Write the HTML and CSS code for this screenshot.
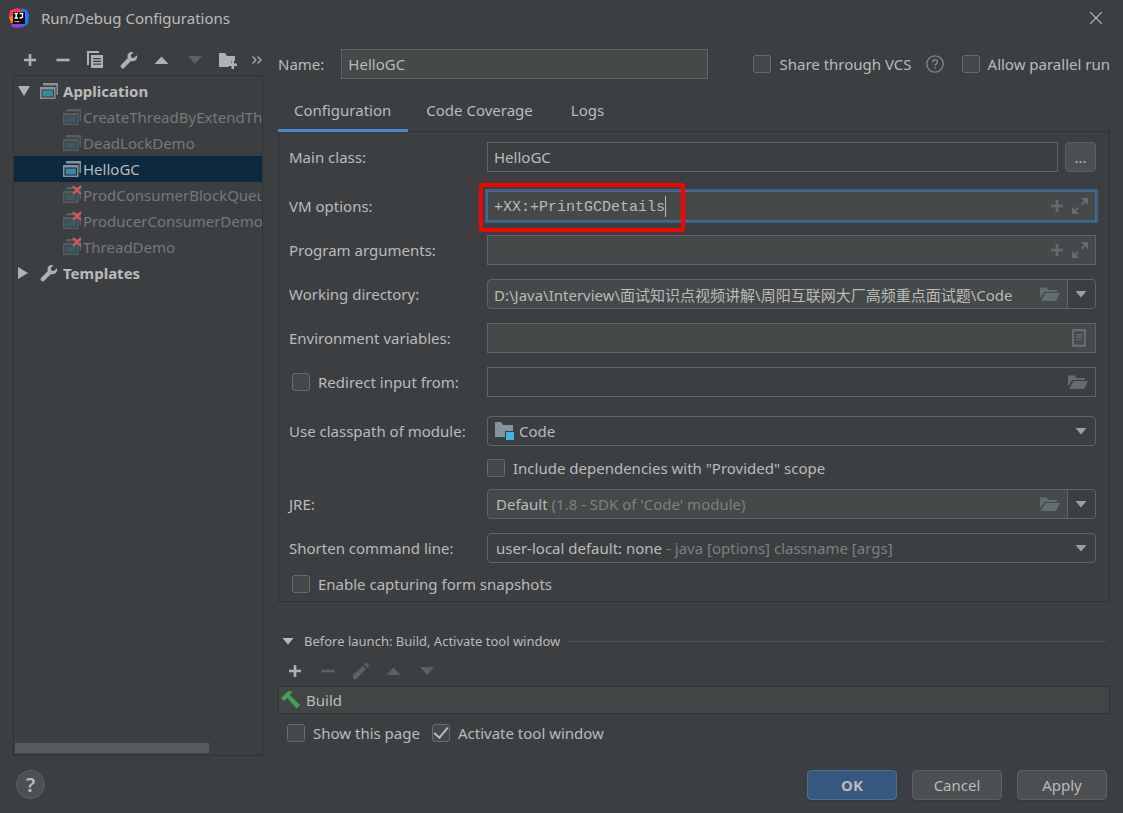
FILE: index.html
```html
<!DOCTYPE html>
<html lang="en">
<head>
<meta charset="utf-8">
<title>Run/Debug Configurations</title>
<link rel="stylesheet" href="styles.css">
</head>
<body>
<svg class="defs" aria-hidden="true">
  <symbol id="plus" viewBox="0 0 18 18"><path d="M7.700 3h2.600v4.700H15v2.600h-4.700V15H7.700v-4.700H3V7.700h4.700z"/></symbol>
  <symbol id="minus" viewBox="0 0 18 18"><path d="M2.500 7.700h13v2.600h-13z"/></symbol>
  <symbol id="copy" viewBox="0 0 18 18"><path d="M0 0h12v2H2v12H0z"/><path fill-rule="evenodd" d="M4 4h12v13H4zM6 7h8v1.200H6zm0 2.800h8v1.200H6zm0 2.800h8v1.200H6z"/></symbol>
  <symbol id="wrench" viewBox="0 0 18 18"><path d="M16.700 4.300 13.900 7 11.300 6.500 10.800 4 13.600 1.200C11.300.4 8.900 1.100 7.900 3.200 7.300 4.500 7.400 5.900 7.900 7L1 13.900c-.7.700-.6 1.700 0 2.400l.6.600c.7.700 1.700.7 2.400 0L11 9.900c1.300.6 2.800.6 4.100-.3 1.900-1.200 2.500-3.300 1.600-5.300z"/></symbol>
  <symbol id="up" viewBox="0 0 18 18"><path d="M1.500 13 8.500 5.500 15.500 13z"/></symbol>
  <symbol id="down" viewBox="0 0 18 18"><path d="M2 5h14l-7 8z"/></symbol>
  <symbol id="folder-plus" viewBox="0 0 20 18"><path d="M1 2h6l2 3h8v5h-4v3h-2v3H1z"/><path d="M13.500 9.500h2.500v3h3v2.500h-3v3h-2.500v-3h-3v-2.500h3z"/></symbol>
  <symbol id="more" viewBox="0 0 12 12"><path d="m1.500 2.500 3.500 3.500-3.500 3.500M6.500 2.500 10 6 6.500 9.500" fill="none" stroke="currentColor" stroke-width="1.300"/></symbol>
  <symbol id="app" viewBox="0 0 18 18"><path class="frame" d="M3 1h15v12h-1.500V3.500H3z"/><path class="frame" fill-rule="evenodd" d="M0 5h15.500v12H0zM1.500 7.500h12.500v8H1.500z"/><path class="screen" d="M2.500 8.500h10.500v6H2.500z"/></symbol>
  <symbol id="cross" viewBox="0 0 10 10"><path d="m1 1 8 8M9 1 1 9" stroke="#db5860" stroke-width="2"/></symbol>
  <symbol id="arrow" viewBox="0 0 12 8"><path d="M.5 1h11L6 7.500z"/></symbol>
  <symbol id="expand" viewBox="0 0 16 16"><path d="M9 0h7v7l-2.500-2.500-3 3L9 6l3-3zM0 9l2.500 2.500L5 9l1.500 1.500L4 13l3 3H0z"/></symbol>
  <symbol id="folder-open" viewBox="0 0 20 16"><path d="M0 12V1.500h7L8.500 4H17v2H4.500z"/><path d="M5.500 7H20l-4 8H1z"/></symbol>
  <symbol id="list" viewBox="0 0 14 18"><path fill-rule="evenodd" d="M0 0h14v18H0zM2.200 2.500h9.600v13H2.200z"/><path d="M4 5h6v1.400H4zm0 2.600h6V9H4zm0 2.600h6v1.400H4z"/></symbol>
  <symbol id="pencil" viewBox="0 0 18 18"><path d="m11 4 3 3L4.500 17H1v-4zM12.200 2.800l1.300-1.300c.6-.6 1.300-.6 1.900 0l1.200 1.200c.6.600.6 1.300 0 1.900L15.200 5.800z"/></symbol>
  <symbol id="hammer" viewBox="0 0 20 18"><path d="M0 7 7 .3h4.500L8.700 4 19 14l-3.500 3.500L6.300 7 3 10z"/></symbol>
</svg>

<main class="dialog">
  <header class="titlebar">
    <svg class="logo" viewBox="0 0 20 20" aria-hidden="true">
      <path fill="#f8345c" d="M1 2.500 9 0l6 3-6 9-9-3z"/>
      <path fill="#ff8218" d="m0 9 6-1v6l-4 1z"/>
      <path fill="#2475f5" d="M13 0l5 2 2 5-1 9-6 3.500-3-3z"/>
      <path fill="#9a3bd8" d="m2 17 5-4 6 5-4 2-6-1z"/>
      <path fill="#000" d="M4 4h12v12H4z"/>
      <path fill="none" stroke="#fff" stroke-width="1.400" d="M5.500 5.500H9M7.200 5.500v4.500M5.500 10H9M10.500 5.500h3V8.500c0 1.200-.8 1.500-3 1.500"/>
      <path fill="#aaa" d="M5.500 13h5v1.200h-5z"/>
    </svg>
    <h1 class="title">Run/Debug Configurations</h1>
    <button class="icon-btn close" aria-label="Close"><svg class="i12" viewBox="0 0 12 12"><path d="m0 0 12 12M12 0 0 12" stroke="currentColor" stroke-width="1.200"/></svg></button>
  </header>

  <div class="content">
    <aside class="sidebar">
      <div class="toolbar">
        <button class="icon-btn" aria-label="Add"><svg class="i18"><use href="#plus"/></svg></button>
        <button class="icon-btn" aria-label="Remove"><svg class="i18"><use href="#minus"/></svg></button>
        <button class="icon-btn" aria-label="Copy"><svg class="i18"><use href="#copy"/></svg></button>
        <button class="icon-btn" aria-label="Edit templates"><svg class="i18"><use href="#wrench"/></svg></button>
        <button class="icon-btn" aria-label="Move up"><svg class="i18"><use href="#up"/></svg></button>
        <button class="icon-btn" aria-label="Move down" disabled><svg class="i18"><use href="#down"/></svg></button>
        <button class="icon-btn" aria-label="New folder"><svg class="i20"><use href="#folder-plus"/></svg></button>
        <button class="icon-btn more" aria-label="More"><svg class="i12"><use href="#more"/></svg></button>
      </div>
      <div class="tree-box">
        <ul class="tree">
          <li class="node group"><svg class="twist" viewBox="0 0 12 12"><path d="M0 1h12L6 11z"/></svg><svg class="i18"><use href="#app"/></svg><span>Application</span></li>
          <li class="node leaf"><span class="badge-icon"><svg class="i18"><use href="#app"/></svg></span><span>CreateThreadByExtendThread</span></li>
          <li class="node leaf"><span class="badge-icon"><svg class="i18"><use href="#app"/></svg></span><span>DeadLockDemo</span></li>
          <li class="node leaf selected"><span class="badge-icon"><svg class="i18"><use href="#app"/></svg></span><span>HelloGC</span></li>
          <li class="node leaf"><span class="badge-icon"><svg class="i18"><use href="#app"/></svg><svg class="badge"><use href="#cross"/></svg></span><span>ProdConsumerBlockQueueDemo</span></li>
          <li class="node leaf"><span class="badge-icon"><svg class="i18"><use href="#app"/></svg><svg class="badge"><use href="#cross"/></svg></span><span>ProducerConsumerDemo</span></li>
          <li class="node leaf"><span class="badge-icon"><svg class="i18"><use href="#app"/></svg><svg class="badge"><use href="#cross"/></svg></span><span>ThreadDemo</span></li>
          <li class="node group"><svg class="twist" viewBox="0 0 12 12"><path d="m0 0 10 6-10 6z"/></svg><svg class="i18"><use href="#wrench"/></svg><span>Templates</span></li>
        </ul>
        <div class="scrollbar"></div>
      </div>
    </aside>

    <section class="editor">
      <div class="name-row">
        <label for="name">Name:</label>
        <input class="field name" id="name" value="HelloGC">
        <label class="check"><input type="checkbox">Share through VCS</label>
        <button class="icon-btn help-small" aria-label="About sharing"><svg class="i18" viewBox="0 0 18 18"><circle cx="9" cy="9" r="8.200" fill="none" stroke="currentColor" stroke-width="1.300"/><path d="M6.500 7.200C6.500 5.600 7.500 4.700 9 4.700s2.500.9 2.500 2.200c0 1.900-2.400 1.900-2.400 3.800M9.100 12v1.600" fill="none" stroke="currentColor" stroke-width="1.500"/></svg></button>
        <label class="check"><input type="checkbox">Allow parallel run</label>
      </div>

      <nav class="tabs" role="tablist">
        <button class="tab active" role="tab" aria-selected="true">Configuration</button>
        <button class="tab" role="tab">Code Coverage</button>
        <button class="tab" role="tab">Logs</button>
      </nav>

      <form class="panel">
        <div class="row spaced">
          <label class="lbl" for="main">Main class:</label>
          <input class="field dark grow" id="main" value="HelloGC">
          <button type="button" class="browse" aria-label="Browse">...</button>
        </div>
        <div class="row">
          <label class="lbl" for="vm">VM options:</label>
          <div class="field box focused grow">
            <input class="bare mono" id="vm" value="+XX:+PrintGCDetails"><span class="caret"></span>
            <span class="tools"><svg class="i18"><use href="#plus"/></svg><svg class="i16"><use href="#expand"/></svg></span>
            <span class="highlight"></span>
          </div>
        </div>
        <div class="row">
          <label class="lbl" for="args">Program arguments:</label>
          <div class="field box grow">
            <input class="bare grow" id="args">
            <span class="tools"><svg class="i18"><use href="#plus"/></svg><svg class="i16"><use href="#expand"/></svg></span>
          </div>
        </div>
        <div class="row">
          <label class="lbl" for="dir">Working directory:</label>
          <div class="field box round grow">
            <input class="bare grow" id="dir" value="D:\Java\Interview\面试知识点视频讲解\周阳互联网大厂高频重点面试题\Code">
            <span class="tools"><svg class="i20"><use href="#folder-open"/></svg></span>
            <button type="button" class="drop split" aria-label="History"><svg class="arrow"><use href="#arrow"/></svg></button>
          </div>
        </div>
        <div class="row">
          <label class="lbl" for="env">Environment variables:</label>
          <div class="field box grow">
            <input class="bare grow" id="env">
            <span class="tools"><svg class="i18"><use href="#list"/></svg></span>
          </div>
        </div>
        <div class="row spaced">
          <label class="lbl check inset" for="redirect"><input type="checkbox" id="redirect">Redirect input from:</label>
          <div class="field box dark grow">
            <input class="bare grow" aria-label="Input file">
            <span class="tools"><svg class="i20"><use href="#folder-open"/></svg></span>
          </div>
        </div>
        <div class="row tight">
          <label class="lbl" for="module">Use classpath of module:</label>
          <div class="field box dark round grow">
            <svg class="i20" viewBox="0 0 20 18"><path fill="#87939a" d="M1 0h6l2 3h10v6h-8v6H1z"/><path fill="#40b6e0" d="M12 10h8v8h-8z"/></svg>
            <select class="bare grow module" id="module"><option>Code</option></select>
            <span class="drop"><svg class="arrow"><use href="#arrow"/></svg></span>
          </div>
        </div>
        <div class="row include">
          <label class="check"><input type="checkbox">Include dependencies with "Provided" scope</label>
        </div>
        <div class="row">
          <label class="lbl" for="jre">JRE:</label>
          <div class="field box round grow">
            <select class="bare lead" id="jre"><option>Default</option></select>
            <span class="hint">(1.8 - SDK of 'Code' module)</span>
            <span class="tools"><svg class="i20"><use href="#folder-open"/></svg></span>
            <button type="button" class="drop split" aria-label="Choose JRE"><svg class="arrow"><use href="#arrow"/></svg></button>
          </div>
        </div>
        <div class="row tight">
          <label class="lbl" for="shorten">Shorten command line:</label>
          <div class="field box dark round grow">
            <select class="bare lead" id="shorten"><option>user-local default: none</option></select>
            <span class="hint">- java [options] classname [args]</span>
            <span class="drop"><svg class="arrow"><use href="#arrow"/></svg></span>
          </div>
        </div>
        <div class="row tight last">
          <label class="check inset"><input type="checkbox">Enable capturing form snapshots</label>
        </div>
      </form>

      <section class="before">
        <h2 class="before-title"><svg class="arrow"><use href="#arrow"/></svg><span>Before launch: Build, Activate tool window</span></h2>
        <div class="toolbar">
          <button class="icon-btn" aria-label="Add task"><svg class="i18"><use href="#plus"/></svg></button>
          <button class="icon-btn" aria-label="Remove task" disabled><svg class="i18"><use href="#minus"/></svg></button>
          <button class="icon-btn" aria-label="Edit task" disabled><svg class="i18"><use href="#pencil"/></svg></button>
          <button class="icon-btn" aria-label="Move task up" disabled><svg class="i18"><use href="#up"/></svg></button>
          <button class="icon-btn" aria-label="Move task down" disabled><svg class="i18"><use href="#down"/></svg></button>
        </div>
        <ul class="tasks"><li class="task"><svg class="i20 hammer"><use href="#hammer"/></svg><span>Build</span></li></ul>
        <div class="options">
          <label class="check"><input type="checkbox">Show this page</label>
          <label class="check"><input type="checkbox" checked>Activate tool window</label>
        </div>
      </section>
    </section>
  </div>

  <footer class="footer">
    <button class="help" aria-label="Help">?</button>
    <button class="btn primary">OK</button>
    <button class="btn">Cancel</button>
    <button class="btn">Apply</button>
  </footer>
</main>
</body>
</html>
```
FILE: styles.css
```css
* { box-sizing: border-box; }
body {
  margin: 0;
  background: #3c3f41;
  color: #bbbbbb;
  font: 15px/20px "Noto Sans", "Noto Sans CJK SC", sans-serif;
}
button, input, select { font: inherit; color: inherit; margin: 0; }
ul { list-style: none; margin: 0; padding: 0; }
svg { display: block; flex: none; fill: currentColor; }
.defs { position: absolute; width: 0; height: 0; }
.i12 { width: 12px; height: 12px; }
.i16 { width: 16px; height: 16px; }
.i18 { width: 18px; height: 18px; }
.i20 { width: 20px; height: 18px; }
.arrow { width: 12px; height: 8px; }

.dialog { display: flex; flex-direction: column; min-height: 100vh; }
.titlebar { display: flex; align-items: center; height: 36px; padding: 0 20px 0 9px; }
.logo { width: 20px; height: 20px; }
.title { flex: 1; margin: 0 0 0 12px; font-size: 15px; font-weight: 400; }
.icon-btn { display: grid; place-items: center; flex: none; width: 33px; height: 30px; padding: 0; border: 0; background: none; color: #afb1b3; }
.icon-btn:disabled { color: #606060; }
.icon-btn.close { width: 14px; color: #bbbbbb; }

.content { display: flex; flex: 1; gap: 15px; padding: 0 13px; }
.sidebar { display: flex; flex-direction: column; width: 250px; padding-top: 9px; }
.toolbar { display: flex; align-items: center; height: 30px; }
.icon-btn.more { width: 19px; justify-content: end; }
.tree-box { display: flex; flex: 1; flex-direction: column; justify-content: space-between; padding: 1px 0 2px; border: 1px solid #323232; overflow: hidden; }
.tree { padding-top: 1px; overflow: hidden; }
.node { display: flex; align-items: center; height: 26px; white-space: nowrap; color: #787878; }
.node.group { gap: 7px; padding-left: 4px; font-weight: 700; color: #bbbbbb; }
.node.group .twist { margin-right: 3px; }
.node.group span { margin-left: -2px; }
.node.leaf { gap: 2px; padding-left: 49px; }
.node.selected { background: #0d293e; color: #bbbbbb; }
.twist { width: 12px; height: 12px; color: #afb1b3; }
.node .i18 { color: #afb1b3; --frame: #87939a; --screen: #3d87a5; }
.leaf:not(.selected) .i18 { --frame: #555d61; --screen: #3c5a66; }
.frame { fill: var(--frame); }
.screen { fill: var(--screen); }
.badge-icon { position: relative; }
.badge { position: absolute; top: -1px; right: -1px; width: 10px; height: 10px; }
.scrollbar { width: 194px; height: 10px; margin-left: 1px; background: #595b5d; }

.editor { flex: 1; min-width: 0; padding-top: 13px; }
.name-row { display: flex; align-items: center; height: 30px; }
.field { height: 30px; border: 1px solid #646464; background: #45494a; padding: 0 6px; outline: 0; }
.field.dark { background: #3c3f41; }
.name { flex: 1; min-width: 0; margin: 0 45px 0 17px; }
.help-small { width: 18px; margin: 0 18px 0 14px; color: #7d878b; }
.check { display: flex; align-items: center; gap: 8px; white-space: nowrap; }
.check input { appearance: none; display: grid; place-items: center; flex: none; width: 18px; height: 18px; border: 1px solid #6b6b6b; border-radius: 3px; background: #43494a; }
.check input:checked::after { content: ""; width: 12px; height: 6px; border: solid #bbbbbb; border-width: 0 0 2px 2px; transform: translateY(-2px) rotate(-50deg); }

.tabs { display: flex; gap: 2px; height: 40px; margin-top: 13px; position: relative; }
.tab { padding: 0 17px 2px 16px; border: 0; border-bottom: 3px solid transparent; background: none; }
.tab:last-child { padding-left: 19px; }
.tab.active { border-bottom-color: #4a88c7; }
.panel { margin-top: -1px; padding: 10px 13px 2px 10px; border: 1px solid #323232; }
.row { display: flex; align-items: center; height: 30px; margin-bottom: 14px; }
.row.spaced { margin-bottom: 19px; }
.row.tight { margin-bottom: 0; }
.row.include { height: 43px; margin: 0; padding-left: 198px; }
.row.last { margin-top: 6px; }
.lbl { flex: none; width: 198px; }
.check.inset { padding-left: 3px; }
.grow { flex: 1; min-width: 0; }
.browse { width: 31px; height: 30px; margin-left: 7px; padding: 0; border: 1px solid #5e6060; border-radius: 4px; background: #4c5052; }
.box { display: flex; align-items: center; position: relative; padding: 0 0 0 6px; }
.round { border-radius: 4px; }
.focused { border-color: #466d94; box-shadow: 0 0 0 2px #3d6185; }
.bare { appearance: none; height: 28px; padding: 0; border: 0; outline: 0; background: none; }
.mono { field-sizing: content; padding-top: 2px; font-family: "Liberation Mono", monospace; }
.caret { width: 1px; height: 21px; background: #bbbbbb; }
.tools { display: flex; align-items: center; gap: 6px; margin-left: auto; padding: 0 7px; color: #636c70; }
.highlight { position: absolute; top: -9px; left: -9px; width: 206px; height: 49px; border: 4px solid #ff0000; border-radius: 3px; pointer-events: none; }
.drop { display: grid; place-items: center; width: 28px; height: 28px; margin-left: auto; padding: 0; border: 0; background: none; color: #9da0a3; pointer-events: none; }
.drop.split { margin-left: 0; padding-right: 1px; border-left: 1px solid #646464; background: #3c3f41; border-radius: 0 3px 3px 0; }
.module { margin-left: 5px; }
.lead { field-sizing: content; margin: 0 4px 0 2px; }
.hint { color: #808080; }

.before { padding-top: 29px; }
.before-title { display: flex; align-items: center; height: 20px; margin: 0; padding: 0 4px; gap: 10px; font-size: 13px; font-weight: 400; }
.before-title::after { content: ""; flex: 1; height: 1px; margin-left: -2px; background: #515151; }
.before .toolbar { height: 35px; padding-top: 4px; }
.tasks { padding: 0; border: 1px solid #323232; background: #414546; }
.task { display: flex; align-items: center; gap: 5px; height: 26px; padding-left: 2px; }
.hammer { color: #499c54; }
.options { display: flex; gap: 12px; padding: 9px 9px 0; }

.footer { display: flex; align-items: center; gap: 15px; height: 57px; padding: 0 16px; }
.help { width: 29px; height: 29px; margin-right: auto; padding: 0; border: 1px solid #5e6060; border-radius: 50%; background: #4c5052; font-size: 20px; font-weight: 600; }
.btn { width: 90px; height: 30px; padding: 0; border: 1px solid #5e6060; border-radius: 4px; background: #4c5052; box-shadow: 0 1px 1px #353739; }
.btn.primary { border-color: #4c708c; background: #365880; font-weight: 700; }
```
